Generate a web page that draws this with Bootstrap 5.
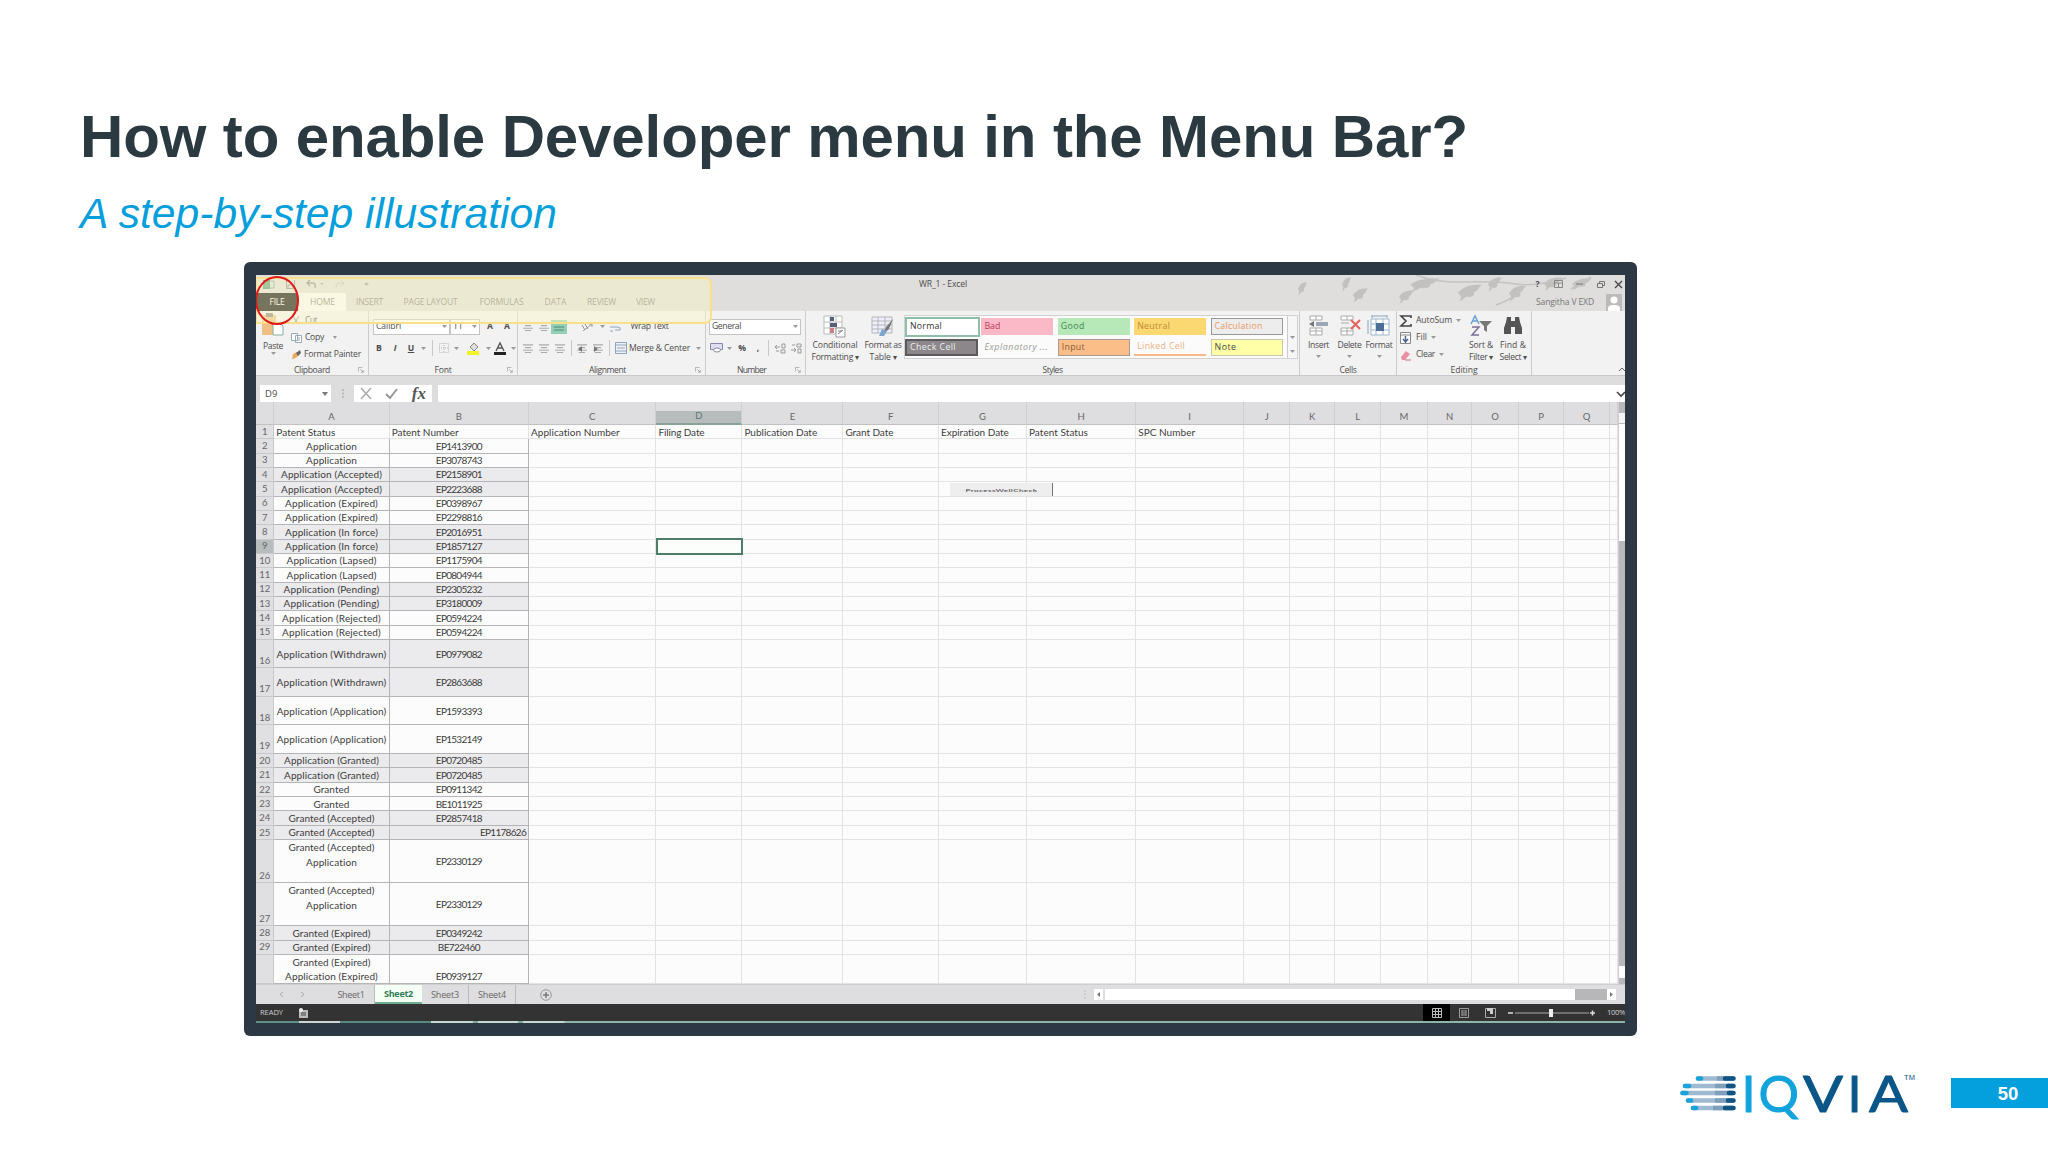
<!DOCTYPE html>
<html lang="en">
<head>
<meta charset="utf-8">
<meta name="viewport" content="width=device-width, initial-scale=1">
<title>How to enable Developer menu in the Menu Bar?</title>
<link href="https://cdn.jsdelivr.net/npm/bootstrap@5.3.0/dist/css/bootstrap.min.css" rel="stylesheet">
<style>
html,body{margin:0;height:1152px;overflow:hidden}
body{background:#fff;font-family:"Liberation Sans",Arial,sans-serif;color:#2c3a42}
svg{display:block;overflow:visible}
.slide{width:2048px;height:1152px;padding:100px 0 0 80px}
.slide-title{font-size:60px;font-weight:700;line-height:74px;margin:0;color:#2b3940;height:74px;white-space:nowrap}
.slide-sub{font-size:42.6px;font-style:italic;line-height:50px;color:#069fdb;margin:14px 0 0;height:50px;white-space:nowrap}
.shot{width:1393px;height:774px;margin:24px 0 0 164px;background:#2c3944;border-radius:6px;padding:13px 12px 12px}
.xl{width:1369px;height:749px;background:#dfdedf;overflow:hidden;font-family:"Open Sans",sans-serif;font-size:8.6px;line-height:11px;color:#4c4c4c}
.fit{display:inline-block;white-space:nowrap}
.topbar{height:36px;background:#dfdedd}
.titlerow{height:18px}
.tabrow{height:18px;color:#7c7c72}
.tabrow>*{display:flex;align-items:center;justify-content:center;height:18px}
.leafart{left:0;top:0}
.g-qat{padding-left:7px;gap:11px;width:300px}
.g-name{width:774px}
.winbtns{width:98px;display:grid;grid-template-columns:21px 21px 21px 21px 14px;justify-items:center;align-items:center}
.t-file{width:42px;background:#060600;color:#fff}
.t-home{width:47px;margin-left:1px;background:#fafafa}
.t-ins{width:47px}.t-page{width:75px}.t-form{width:67px}.t-data{width:41px}.t-rev{width:51px}.t-view{width:37px}
.t-user{margin-left:auto;width:92px;gap:12px;padding-right:0;color:#777}
.avatar{width:16px;height:17px;background:#bbb}
.ribbon{height:65px;background:#f3f2f3;border-bottom:1px solid #c9c9c9}
.grp{border-right:1px solid #cdcccd;display:grid;grid-template-rows:54px 11px;position:relative}
.grp-title{text-align:center;display:flex;align-items:center;justify-content:center}
.launch{position:absolute;right:4px;bottom:2px}
.w-clip{width:113px}.w-font{width:149px}.w-align{width:188px}.w-num{width:100px}.w-sty{width:494px}.w-cell{width:97px}.w-edit{width:135px}
.clip-body{display:grid;grid-template-columns:34px 1fr;padding-top:1px}
.clip-list{display:grid;grid-template-rows:17px 17px 17px;align-items:center;padding-left:1px}
.clip-list>div{display:flex;align-items:center;gap:3px}
.stack2{display:grid;grid-template-rows:19px 16px;padding-top:6px;row-gap:4px}
.stack2>div{align-items:center;justify-items:center;display:grid}
.box{height:16px;background:#fff;border:1px solid #c4c4c4;display:flex;align-items:center;justify-content:space-between;padding:0 2px;width:100%}
.f1{grid-template-columns:77px 30px 20px 14px;padding-left:4px;justify-content:start}
.f2{grid-template-columns:16px 16px 16px 8px 10px 14px 10px 24px 6px 18px 8px;padding-left:2px;justify-content:start}
.a1{grid-template-columns:16px 15px 16px 10px 20px 10px 18px 49px;padding-left:2px;justify-content:start}
.a2{grid-template-columns:16px 16px 16px 6px 16px 16px 7px 15px 63px 14px;padding-left:2px;justify-content:start}
.n1{grid-template-columns:92px;padding-left:3px}
.n2{grid-template-columns:20px 6px 20px 12px 8px 16px 17px;padding-left:0;justify-content:start}
.vsep{width:1px;height:16px;background:#c8c8c8}
.bigbtn{display:flex;flex-direction:column;align-items:center;line-height:12px}
.bigbtn svg{margin-bottom:1px}
.sty-body{display:grid;grid-template-columns:54px 42px 1fr;padding:4px 5px 0 2px}
.gal{height:44px;background:#fbfbfb;border:1px solid #d2d2d2;display:grid;grid-template-columns:repeat(5,76.4px) 10px;grid-template-rows:21px 21px;align-items:center}
.sw{width:72px;height:17px;padding-left:3px;display:flex;align-items:center;font-size:8.8px}
.s-norm{width:75px;height:20px;border:2px solid #8fbfaa;background:#fff;color:#333}
.s-bad{background:#fbb8c6;color:#b5405a}.s-good{background:#b6e8b8;color:#3f8a4c}
.s-neu{background:#fcd873;color:#c08a30}.s-calc{background:#eeedee;border:1px solid #999;color:#e89a5e}
.s-check{background:#8b878a;border:2px solid #5c5a5c;color:#eee;width:73px}.s-exp{color:#999;font-style:italic}
.s-inp{background:#fcbe88;border:1px solid #a99;color:#8a5a38}.s-link{color:#eeb184;border-bottom:2px solid #f8b98a}
.s-note{background:#ffffa8;border:1px solid #c8c8b0;color:#444}
.gal-scroll{grid-column:6;grid-row:1/3;height:42px;border-left:1px solid #ccc;display:grid;grid-template-rows:repeat(3,14px);justify-items:center;align-items:center;background:#f6f6f6}
.cell-body{display:grid;grid-template-columns:33px 29px 30px;padding:4px 0 0 2px}
.edit-body{display:grid;grid-template-columns:66px 34px 30px;padding-left:3px}
.edit-list{display:grid;grid-template-rows:17px 17px 17px;padding-top:1px;align-items:center}
.edit-list>div{display:flex;gap:4px;align-items:center}
.fbar{height:26px;padding:9px 0 0 4px;background:#dedddd}
.fbar>div{height:17px;background:#fff;display:flex;align-items:center}
.namebox{width:71px;padding:0 3px 0 5px;justify-content:space-between;font-size:9.5px}
.fbar .dots{width:23px;background:none;justify-content:center}
.fxbox{width:78px;justify-content:space-between;padding:0 6px}
.fxi{font-family:"Liberation Serif",serif;font-style:italic;font-weight:700;font-size:17px;line-height:16px;color:#555}
.fline{width:1187px;margin-left:6px;justify-content:flex-end;padding-right:0}
.gridwrap{height:582px;position:relative;font-family:Lato,sans-serif;font-size:10px;line-height:14.33px;color:#3c3c3c;background:#dedddf}
.cells{width:1362px;height:582px;overflow:hidden;display:grid;grid-template-columns:18.3px 115.4px 139.3px 127.5px 85.9px 101px 95.6px 88px 109.2px 107.8px 46.4px 44.7px 46.3px 46.4px 44.6px 46.6px 45.4px 45.3px 1fr;grid-template-rows:23px 14.33px repeat(14,14.33px) repeat(4,28.5px) repeat(6,14.4px) 43px 43px 14.3px 14.3px 29.3px}
.cells>div{border-right:1px solid #e3e2e6;border-bottom:1px solid #e3e2e6;background:#fdfcfd;display:flex;align-items:center;overflow:visible;white-space:nowrap;min-width:0;min-height:0}
.cells>.hd{background:linear-gradient(#dedddf,#dedddf);border-right-color:#cfced0;border-bottom:1px solid #c2c2c2;justify-content:center;padding-top:8px;color:#666;font-size:9.5px}
.cells>.hd-sel{background:linear-gradient(#dedddf 0 9px,#b7bcbc 9px);border-bottom:2px solid #8aa398;color:#5f7a70}
.cells>.rn{background:#e0dfe1;border-color:#c9c8ca;justify-content:center;align-items:flex-end;font-size:9.5px;line-height:12.5px;color:#666}
.cells>.rn-sel{background:#b7bcbc}
.cells>.data{border-color:#b5b4b8;justify-content:center;text-align:center}
.cells>.shade{background:#ebeaec}
.cells>.endr{justify-content:flex-end;padding-right:2px}
.cells>.toprow{padding-left:2px;border-bottom-color:#e3e2e6}
.cells>.two{align-items:flex-start}
.selbox{left:400px;top:136px;width:87px;height:17px;border:2px solid #4f7e68;background:#fbfefb}
.macro{left:694px;top:81px;width:103px;height:13px;background:#efeeef;border-right:1px solid #777;display:flex;align-items:center;justify-content:center;padding-left:1px}
.macro span{font-weight:700;line-height:10px;font-size:8px;color:#666;transform:scaleY(.5)}
.vbar{width:7px;height:582px;background:#b9b8ba;border-left:1px solid #d0d0d0;padding-top:11px}
.vbar .up{height:11px;background:#f4f4f4;border-bottom:1px solid #bbb}
.vbar .th{height:117px;background:#fff}
.vbar .dn{margin-top:425px;height:12px;background:#fff}
.tabs{height:20px;background:#dedddf;border-top:1px solid #cfcfcf;color:#666;font-size:9px}
.tabs>*{height:19px;display:flex;align-items:center;justify-content:center}
.tabs>.st-nav{width:72px}
.tabs>.st-add{width:60px}
.st{width:47px;border-right:1px solid #bbb}
.st-on{background:#f4fff6;color:#2f7d55;font-weight:700;border-bottom:2px solid #6fae8d;border-right:0}
.hs{width:539px;height:11px!important;align-self:center;gap:0;justify-content:flex-start!important}
.hs .ar{width:9px;height:11px;background:#fff}
.hs .th{width:470px;height:11px;background:#fff;margin-left:2px}
.hs .tr{width:32px;height:11px;background:#b7b6b8}
.status{height:17px;background:#343334;color:#ccc;font-size:7.6px}
.status>*{height:17px;display:flex;align-items:center;justify-content:center}
.v-btn{width:27px}.v-zoom{width:96px}.v-pct{width:18px}.v-gap{width:7px}
.sliver{height:3px;background:linear-gradient(90deg,#5f8f88 0 43px,#cdd6d3 43px 84px,#56897c 84px 175px,#c5d9d2 175px 217px,#7fa79c 217px 222px,#c5d9d2 222px 262px,#7fa79c 262px 267px,#c5d9d2 267px 307px,#8fb3a8 310px);border-bottom:1px solid #2c3944}
.hilite{left:-1px;top:2px;width:457px;height:47px;border:2px solid #fbe08c;border-radius:0 7px 7px 0;background:rgba(250,246,200,.46)}
.ring{left:-1px;top:1px;width:44px;height:49px;border:2px solid #e01818;border-radius:50%}
.footer-row{padding-top:35px}
.pageno{width:97px;height:30px;background:#04a0de;color:#fff;font-weight:700;font-size:18.5px;line-height:31px;text-align:center;padding-left:17px;margin:7px 0 0 36px}
</style>
<script src="https://cdn.jsdelivr.net/npm/bootstrap@5.3.0/dist/js/bootstrap.bundle.min.js"></script>
</head>
<body>
<svg width="0" height="0" class="position-absolute">
 <defs>
  <symbol id="dd" viewBox="0 0 5 3"><path d="M0 0h5L2.500 3z" fill="#999"/></symbol>
  <symbol id="lines" viewBox="0 0 11 10"><path d="M0 1h11M2 4h7M0 7h11M2 9.500h7" stroke="#aaa" stroke-width="1.200"/></symbol>
  <symbol id="ln" viewBox="0 0 8 8"><path d="M.5 6V.5H6M3 3l4 4M7 4v3H4" stroke="#999" fill="none"/></symbol>
  <symbol id="leaf" viewBox="0 0 20 20" preserveAspectRatio="none"><path d="M0 10C4 3 11 0 20 1 16 4 18 7 13 9 15 12 11 16 7 14 5 16 3 19 1 19 4 14 2 12 0 10z" fill="#bdbcbc"/></symbol>
 </defs>
</svg>
<main class="slide">
 <h1 class="slide-title"><span class="fit" data-w="1388">How to enable Developer menu in the Menu Bar?</span></h1>
 <p class="slide-sub"><span class="fit" data-w="477">A step-by-step illustration</span></p>

 <section class="shot">
  <div class="xl position-relative">
   <header class="topbar position-relative">
    <svg class="leafart position-absolute" width="1369" height="36">
     <g opacity=".85">
      <use href="#leaf" x="1042" y="7" width="9" height="14"/><use href="#leaf" x="1086" y="2" width="9" height="15"/>
      <use href="#leaf" x="1097" y="13" width="15" height="15"/><use href="#leaf" x="1143" y="15" width="15" height="14"/>
      <use href="#leaf" x="1154" y="3" width="30" height="14"/><use href="#leaf" x="1202" y="9" width="24" height="18"/>
      <use href="#leaf" x="1232" y="2" width="14" height="15"/><use href="#leaf" x="1253" y="10" width="17" height="17"/>
      <use href="#leaf" x="1288" y="2" width="18" height="14"/><use href="#leaf" x="1316" y="3" width="20" height="12"/>
     </g>
     <path d="M1160 0q20 8 50 7t50 2 50-6M1240 30q18-6 28-18M1315 14l20-12" stroke="#c4c3c3" stroke-width="1.500" fill="none"/>
    </svg>
    <div class="titlerow d-flex align-items-center position-relative">
     <div class="g-qat d-flex align-items-center">
      <svg width="12" height="10"><path d="M0 1h7v9H0z" fill="#4e9a70"/><path d="M7 2h4v7H7M2 3l3 5M5 3L2 8" stroke="#79a78c" fill="none"/></svg>
      <svg width="9" height="9"><path d="M.5 0v8.500h8V0M2 8V5h5v3" stroke="#888" fill="none"/></svg>
      <svg width="18" height="9"><path d="M1 3h6q3 0 2 5M4 0L1 3l3 3" stroke="#888" stroke-width="1.400" fill="none"/><path d="M14 3h4l-2 2z" fill="#999"/></svg>
      <svg width="18" height="9" opacity=".35"><path d="M9 3H4Q1 3 1 8M6 0l3 3-3 3" stroke="#888" fill="none"/></svg>
      <svg width="5" height="3"><use href="#dd"/></svg>
     </div>
     <div class="g-name text-center"><span class="fit" data-w="48">WR_1 - Excel</span></div>
     <div class="winbtns ms-auto"><b>?</b>
      <svg width="9" height="8"><path d="M.5.5h8v7h-8zM.5 3h8M4.500 3v4" stroke="#888" fill="none"/></svg>
      <svg width="7" height="2"><path d="M0 1h7" stroke="#777"/></svg>
      <svg width="8" height="7"><path d="M.5 2.500h5v4h-5zM2.500 2V.5h5v4H6" stroke="#777" fill="none"/></svg>
      <svg width="7" height="7"><path d="M0 0l7 7M7 0L0 7" stroke="#444" stroke-width="1.300"/></svg>
     </div>
    </div>
    <nav class="tabrow d-flex position-relative">
     <div class="t-file"><span class="fit" data-w="15">FILE</span></div><div class="t-home"><span class="fit" data-w="25">HOME</span></div>
     <div class="t-ins"><span class="fit" data-w="27">INSERT</span></div><div class="t-page"><span class="fit" data-w="54">PAGE LAYOUT</span></div>
     <div class="t-form"><span class="fit" data-w="44">FORMULAS</span></div><div class="t-data"><span class="fit" data-w="22">DATA</span></div>
     <div class="t-rev"><span class="fit" data-w="29">REVIEW</span></div><div class="t-view"><span class="fit" data-w="19">VIEW</span></div>
     <div class="t-user"><span class="fit" data-w="58">Sangitha V EXD</span>
      <svg class="avatar" width="16" height="17"><circle cx="8" cy="6" r="3.500" fill="#fff"/><path d="M2 17v-3q0-3 6-3t6 3v3z" fill="#fff"/></svg></div>
    </nav>
   </header>

   <div class="ribbon d-flex">
    <div class="grp w-clip">
     <div class="clip-body">
      <div class="bigbtn"><svg width="24" height="27"><rect x="1" y="3" width="14" height="20" rx="1" fill="#efbf83"/><rect x="5" y="1" width="7" height="4" fill="#8c8378"/><path d="M12 11h7l3 3v9H12z" fill="#fff" stroke="#8ab09a"/></svg><span class="fit" data-w="20">Paste</span><svg width="5" height="3"><use href="#dd"/></svg></div>
      <div class="clip-list">
       <div><svg width="11" height="10"><path d="M2 0l5 8M8 0L3 8" stroke="#888"/></svg><span class="fit" data-w="12">Cut</span></div>
       <div><svg width="11" height="10"><path d="M.5.5h6v7h-6zM4.500 2.500h6v7h-6zM6 5h3M6 7h3" stroke="#9ab" fill="#fff"/></svg><span class="fit" data-w="19">Copy</span><svg width="14" height="3"><path d="M6 0h4l-2 3z" fill="#999"/></svg></div>
       <div><svg width="10" height="10"><path d="M1 9l1-5 4-2 2 3-3 3z" fill="#efa95e"/><path d="M5 3l4-3 1 3-3 3z" fill="#666"/></svg><span class="fit" data-w="57">Format Painter</span></div>
      </div>
     </div>
     <div class="grp-title"><span class="fit" data-w="36">Clipboard</span></div><svg class="launch" width="6" height="6"><use href="#ln"/></svg>
    </div>
    <div class="grp w-font">
     <div class="stack2">
      <div class="f1"><div class="box"><span class="fit" data-w="25">Calibri</span><svg width="5" height="3"><use href="#dd"/></svg></div><div class="box"><span>11</span><svg width="5" height="3"><use href="#dd"/></svg></div><b>A</b><b>A</b></div>
      <div class="f2"><b>B</b><i><b>I</b></i><u><b>U</b></u><svg width="5" height="3"><use href="#dd"/></svg><span class="vsep"></span>
       <svg width="10" height="10"><path d="M.5.5h9v9h-9zM5 0v10M0 5h10" stroke="#bbb" fill="none" stroke-dasharray="1 1"/></svg><svg width="5" height="3"><use href="#dd"/></svg>
       <svg width="13" height="13"><path d="M3 5l4-4 4 4-4 4z" fill="#ddd" stroke="#888"/><path d="M0 9h12v4H0z" fill="#f2f22a"/></svg><svg width="5" height="3"><use href="#dd"/></svg>
       <svg width="12" height="13"><path d="M2 9L6 1l4 8M3.500 6h5" stroke="#555" stroke-width="1.400" fill="none"/><path d="M0 10h12v3H0z" fill="#222"/></svg><svg width="5" height="3"><use href="#dd"/></svg></div>
     </div>
     <div class="grp-title"><span class="fit" data-w="17">Font</span></div><svg class="launch" width="6" height="6"><use href="#ln"/></svg>
    </div>
    <div class="grp w-align">
     <div class="stack2">
      <div class="a1"><svg width="10" height="9"><use href="#lines"/></svg><svg width="10" height="9"><use href="#lines"/></svg><svg width="16" height="14"><path d="M0 0h16v14H0z" fill="#93cfb5"/><path d="M3 7h10M3 10h10" stroke="#4e8a70"/></svg><i></i>
       <svg width="12" height="10"><path d="M1 3l3 5M4 2l3 5M2 9L11 2M8 2h3v3" stroke="#999" fill="none"/></svg><svg width="5" height="3"><use href="#dd"/></svg>
       <svg width="12" height="12"><path d="M0 2h11M0 6h8q3 0 2 3H5M0 10h3" stroke="#8aa5bd" fill="none"/></svg><span class="fit" data-w="38">Wrap Text</span></div>
      <div class="a2"><svg width="10" height="9"><use href="#lines"/></svg><svg width="10" height="9"><use href="#lines"/></svg><svg width="10" height="9"><use href="#lines"/></svg><span class="vsep"></span>
       <svg width="10" height="9"><use href="#lines"/><path d="M5 2L1 5l4 3z" fill="#777"/></svg><svg width="10" height="9"><use href="#lines"/><path d="M1 2l4 3-4 3z" fill="#777"/></svg><span class="vsep"></span>
       <svg width="12" height="12"><path d="M.5.5h11v11H.5zM0 3h12M0 9h12M2 6h8" stroke="#8aa5bd" fill="none"/></svg><span class="fit" data-w="61">Merge &amp; Center</span><svg width="5" height="3"><use href="#dd"/></svg></div>
     </div>
     <div class="grp-title pe-2"><span class="fit" data-w="37">Alignment</span></div><svg class="launch" width="6" height="6"><use href="#ln"/></svg>
    </div>
    <div class="grp w-num">
     <div class="stack2">
      <div class="n1"><div class="box"><span class="fit" data-w="29">General</span><svg width="5" height="3"><use href="#dd"/></svg></div></div>
      <div class="n2"><svg width="13" height="10"><path d="M.5.5h12v6H.5z" fill="#dde" stroke="#88a"/><ellipse cx="7" cy="7" rx="3.500" ry="2" fill="#fff" stroke="#88a"/></svg><svg width="5" height="3"><use href="#dd"/></svg><b>%</b><b>,</b><span class="vsep"></span>
       <svg width="11" height="9"><path d="M0 3h5M2 1L0 3l2 2M7 0v4h3V0zM1 7h3M6 6h4v3H6z" stroke="#999" fill="none"/></svg><svg width="11" height="9"><path d="M0 6h5M3 4l2 2-2 2M7 5v4h3V5zM1 1h3M6 0h4v3H6z" stroke="#999" fill="none"/></svg></div>
     </div>
     <div class="grp-title pe-2"><span class="fit" data-w="29">Number</span></div><svg class="launch" width="6" height="6"><use href="#ln"/></svg>
    </div>
    <div class="grp w-sty">
     <div class="sty-body">
      <div class="bigbtn"><svg width="24" height="23"><path d="M1 1h18v18H1zM1 7h18M1 13h18M7 1v18M13 1v18" stroke="#bbb" fill="#fff"/><path d="M7 2h4v4H7zM7 8h7v4H7z" fill="#555f78"/><path d="M7 13h4v5H7z" fill="#cf7c84"/><path d="M13 13h9v9h-9z" fill="#fff" stroke="#999"/><path d="M15 19l5-4M15 16h4" stroke="#777"/></svg><span class="fit" data-w="45">Conditional</span><span class="fit" data-w="47">Formatting<small> ▾</small></span></div>
      <div class="bigbtn"><svg width="24" height="23"><path d="M1 2h20v16H1zM1 6h20M1 10h20M1 14h20M7 2v16M14 2v16" stroke="#b5b5b5" fill="#eef"/><path d="M12 19l3-7 7-8-4 10z" fill="#777"/><path d="M8 21l3-7 5 2-3 5z" fill="#7da5cf"/></svg><span class="fit" data-w="37">Format as</span><span class="fit" data-w="27">Table<small> ▾</small></span></div>
      <div class="gal">
       <div class="sw s-norm"><span class="fit" data-w="32">Normal</span></div><div class="sw s-bad"><span class="fit" data-w="16">Bad</span></div><div class="sw s-good"><span class="fit" data-w="24">Good</span></div><div class="sw s-neu"><span class="fit" data-w="33">Neutral</span></div><div class="sw s-calc"><span class="fit" data-w="48">Calculation</span></div>
       <div class="gal-scroll"><svg width="5" height="3"></svg><svg width="5" height="3"><use href="#dd"/></svg><svg width="5" height="3"><use href="#dd"/></svg></div>
       <div class="sw s-check"><span class="fit" data-w="46">Check Cell</span></div><div class="sw s-exp"><span class="fit" data-w="64">Explanatory ...</span></div><div class="sw s-inp"><span class="fit" data-w="23">Input</span></div><div class="sw s-link"><span class="fit" data-w="48">Linked Cell</span></div><div class="sw s-note"><span class="fit" data-w="22">Note</span></div>
      </div>
     </div>
     <div class="grp-title pe-1"><span class="fit" data-w="20">Styles</span></div>
    </div>
    <div class="grp w-cell">
     <div class="cell-body">
      <div class="bigbtn"><svg width="22" height="23"><path d="M2 1h12v4H2zM2 13h12v7H2zM2 16h12M8 1v4M8 13v7" stroke="#aaa" fill="#fff"/><path d="M8 7h12v4H8z" fill="#9aa6b5"/><path d="M6 6v6L1 9z" fill="#777"/></svg><span class="fit" data-w="21">Insert</span><svg width="5" height="3" class="mt-1"><use href="#dd"/></svg></div>
      <div class="bigbtn"><svg width="22" height="23"><path d="M2 1h12v4H2zM2 13h12v7H2zM2 16h12M8 1v4M8 13v7M2 8h8" stroke="#aaa" fill="#fff"/><path d="M12 5l9 9M21 5l-9 9" stroke="#e0605c" stroke-width="2"/></svg><span class="fit" data-w="24">Delete</span><svg width="5" height="3" class="mt-1"><use href="#dd"/></svg></div>
      <div class="bigbtn"><svg width="22" height="23"><path d="M3 4h18v16H3zM3 9h18M3 15h18M8 4v16M15 4v16" stroke="#9db6cc" fill="#fff"/><path d="M8 8h8v8H8z" fill="#4b6f96"/><path d="M4 1h15M4 0v3M19 0v3M0 5v14" stroke="#8aa5bd"/></svg><span class="fit" data-w="27">Format</span><svg width="5" height="3" class="mt-1"><use href="#dd"/></svg></div>
     </div>
     <div class="grp-title"><span class="fit" data-w="17">Cells</span></div>
    </div>
    <div class="grp w-edit">
     <div class="edit-body">
      <div class="edit-list">
       <div><svg width="12" height="12"><path d="M11 3V1H1l5 5-5 5h10V9" stroke="#444" stroke-width="1.600" fill="none"/></svg><span class="fit" data-w="36">AutoSum</span><svg width="5" height="3"><use href="#dd"/></svg></div>
       <div><svg width="12" height="12"><path d="M.5.5h10v11H.5zM0 3h11" stroke="#888" fill="#fff"/><path d="M5.500 4v5M3 7l2.500 3L8 7" stroke="#47698c" stroke-width="1.500" fill="none"/></svg><span class="fit" data-w="11">Fill</span><svg width="5" height="3"><use href="#dd"/></svg></div>
       <div><svg width="12" height="12"><path d="M1 8l5-6 4 3-5 6H2z" fill="#ea8fa3"/><path d="M5 11h6" stroke="#b77"/></svg><span class="fit" data-w="19">Clear</span><svg width="5" height="3"><use href="#dd"/></svg></div>
      </div>
      <div class="bigbtn pt-1 pe-1"><svg width="22" height="23"><path d="M1 9l4-8 4 8M2 6h6" stroke="#6ba0d0" stroke-width="1.500" fill="none"/><path d="M2 12h7l-7 8h7" stroke="#7c6e96" stroke-width="1.500" fill="none"/><path d="M9 6h13l-5 5v6l-3-2v-4z" fill="#777"/></svg><span class="fit" data-w="24">Sort &amp;</span><span class="fit" data-w="24">Filter<small> ▾</small></span></div>
      <div class="bigbtn pt-1 pe-1"><svg width="20" height="23"><path d="M4 2h4v4h4V2h4l1 5 2 6v6h-7v-7H8v7H1v-6l2-6z" fill="#555"/></svg><span class="fit" data-w="26">Find &amp;</span><span class="fit" data-w="27">Select<small> ▾</small></span></div>
     </div>
     <div class="grp-title"><span class="fit" data-w="27">Editing</span></div>
    </div>
    <div class="ms-auto align-self-end pb-1"><svg width="6" height="4"><path d="M0 4l3-3 3 3" stroke="#666" fill="none"/></svg></div>
   </div>

   <div class="fbar d-flex">
    <div class="namebox"><span>D9</span><svg width="6" height="4"><path d="M0 0h6L3 4z" fill="#777"/></svg></div>
    <div class="dots"><svg width="2" height="9"><path d="M1 0v9" stroke="#999" stroke-dasharray="2 1.500"/></svg></div>
    <div class="fxbox"><svg width="12" height="11"><path d="M1 0l10 11M11 0L1 11" stroke="#aaa" stroke-width="1.500"/></svg><svg width="13" height="11"><path d="M1 6l4 4 7-9" stroke="#999" stroke-width="2" fill="none"/></svg><span class="fxi">fx</span></div>
    <div class="fline"><svg width="8" height="6"><path d="M0 1l4 4 4-4" stroke="#444" stroke-width="1.600" fill="none"/></svg></div>
   </div>

   <div class="gridwrap d-flex">
    <div class="cells" id="cells"></div>
    <div class="vbar"><div class="up"></div><div class="th"></div><div class="dn"></div></div>
    <div class="selbox position-absolute"></div>
    <div class="macro position-absolute"><span class="fit" data-w="72">ProcessWellCheck</span></div>
   </div>

   <div class="tabs d-flex">
    <div class="st-nav gap-3"><svg width="5" height="5"><path d="M4 0L1 2.500 4 5" stroke="#aaa" fill="none"/></svg><svg width="5" height="5"><path d="M1 0l3 2.500L1 5" stroke="#aaa" fill="none"/></svg></div>
    <div class="st"><span class="fit" data-w="27">Sheet1</span></div><div class="st st-on"><span class="fit" data-w="29">Sheet2</span></div><div class="st"><span class="fit" data-w="28">Sheet3</span></div><div class="st"><span class="fit" data-w="28">Sheet4</span></div>
    <div class="st-add"><svg width="12" height="12"><circle cx="6" cy="6" r="5.300" fill="none" stroke="#999"/><path d="M6 3v6M3 6h6" stroke="#777" stroke-width="1.400"/></svg></div>
    <div class="ms-auto"><svg width="2" height="9"><path d="M1 0v9" stroke="#bbb" stroke-dasharray="2 1.500"/></svg></div>
    <div class="hs ps-2"><span class="ar"><svg width="9" height="11"><path d="M6 3L3 5.500 6 8z" fill="#777"/></svg></span><span class="th"></span><span class="tr"></span><span class="ar"><svg width="9" height="11"><path d="M3 3l3 2.500L3 8z" fill="#777"/></svg></span></div>
   </div>
   <div class="status d-flex">
    <div class="ps-1"><span class="fit" data-w="23">READY</span></div>
    <div class="ps-3"><svg width="10" height="10"><path d="M0 2h9v8H0z" fill="#bbb"/><path d="M2 5h5M2 7h5" stroke="#444"/><circle cx="2" cy="2" r="2" fill="#eee"/></svg></div>
    <div class="v-btn ms-auto bg-black"><svg width="10" height="10"><path d="M.5.5h9v9h-9zM0 3.500h10M0 6.500h10M3.500 0v10M6.500 0v10" stroke="#bbb" fill="none"/></svg></div>
    <div class="v-btn"><svg width="10" height="10"><path d="M.5.5h9v9h-9zM3 2v6M7 2v6M3 3h4M3 5h4M3 7h4" stroke="#999" fill="none"/></svg></div>
    <div class="v-btn"><svg width="11" height="10"><path d="M.5.5h10v9H.5z" stroke="#aaa" fill="none"/><path d="M2 0h6v6H5V3H2z" fill="#ccc"/></svg></div>
    <div class="v-zoom"><svg width="88" height="10"><path d="M0 5h5M82 5h5M84.500 2.500v5" stroke="#ddd" stroke-width="1.500"/><path d="M7 5h74" stroke="#aaa"/><path d="M41 1h4v8h-4z" fill="#eee"/></svg></div>
    <div class="v-gap"></div>
    <div class="v-pct"><span class="fit" data-w="18">100%</span></div>
   </div>
   <div class="sliver"></div>

   <div class="hilite position-absolute"></div>
   <div class="ring position-absolute"></div>
  </div>
 </section>

 <footer class="footer-row d-flex justify-content-end">
  <svg width="236" height="46" viewBox="0 0 236 46" role="img" aria-label="IQVIA">
   <g stroke-width="4.600" stroke-linecap="round">
    <path d="M19 7.500h35M6 15h48M3.500 22h50M9 29.500h45M14 37h40" stroke="#9dbad2"/>
    <path d="M36 15h18M36 22h18M36 29.500h18M34 37h20M38 7.500h16" stroke="#7f9fbd" stroke-linecap="butt"/>
    <path d="M19 7.500h3M6 15h4M3.500 22h4M9 29.500h3M14 37h3" stroke="#18a3da"/>
    <path d="M46 7.500h8.500M49 15h5.500M50 22h4.500M49 29.500h5.500M46 37h8.500" stroke="#0f5483"/>
   </g>
   <g font-family="Lato" font-size="50.500" fill="#12a3dc" stroke="#12a3dc" stroke-width="1" stroke-linejoin="round">
    <text x="62.500" y="40.500">I</text><text x="79.500" y="40.500">Q</text>
    <g fill="#0b5688" stroke="#0b5688"><text x="124" y="40.500" textLength="40" lengthAdjust="spacingAndGlyphs">V</text><text x="168.500" y="40.500">I</text><text x="190" y="40.500" textLength="39" lengthAdjust="spacingAndGlyphs">A</text></g>
   </g>
   <text x="225" y="8.500" font-family="Liberation Sans" font-size="7.500" fill="#0b5688" textLength="11">TM</text>
  </svg>
  <div class="pageno">50</div>
 </footer>
</main>
<script>
const cols = "ABCDEFGHIJKLMNOPQ".split("");
const heads = ["Patent Status","Patent Number","Application Number","Filing Date","Publication Date","Grant Date","Expiration Date","Patent Status","SPC Number"];
const headW = [59,67,89,46,73,48,68,59,57];
const rows = [
 ["Application","EP1413900",0],["Application","EP3078743",0],
 ["Application (Accepted)","EP2158901",1],["Application (Accepted)","EP2223688",1],
 ["Application (Expired)","EP0398967",0],["Application (Expired)","EP2298816",0],
 ["Application (In force)","EP2016951",1],["Application (In force)","EP1857127",1],
 ["Application (Lapsed)","EP1175904",0],["Application (Lapsed)","EP0804944",0],
 ["Application (Pending)","EP2305232",1],["Application (Pending)","EP3180009",1],
 ["Application (Rejected)","EP0594224",0],["Application (Rejected)","EP0594224",0],
 ["Application (Withdrawn)","EP0979082",1],["Application (Withdrawn)","EP2863688",1],
 ["Application (Application)","EP1593393",0],["Application (Application)","EP1532149",0],
 ["Application (Granted)","EP0720485",1],["Application (Granted)","EP0720485",1],
 ["Granted","EP0911342",0],["Granted","BE1011925",0],
 ["Granted (Accepted)","EP2857418",1],["Granted (Accepted)","EP1178626",1],
 ["Granted (Accepted)|Application","EP2330129",0],["Granted (Accepted)|Application","EP2330129",0],
 ["Granted (Expired)","EP0349242",1],["Granted (Expired)","BE722460",1],
 ["Granted (Expired)|Application (Expired)","EP0939127",0]];
const widths = {"Application":51,"Application (Accepted)":101,"Application (Expired)":93,"Application (In force)":93,"Application (Lapsed)":90,"Application (Pending)":96,"Application (Rejected)":99,"Application (Withdrawn)":110,"Application (Application)":110,"Application (Granted)":95,"Granted":36,"Granted (Accepted)":86,"Granted (Expired)":78};
const span = (t,w) => `<span class="fit" data-w="${w}">${t}</span>`;
let h = `<div class="hd"></div>` + cols.map(c => `<div class="hd${c==="D"?" hd-sel":""}">${c}</div>`).join("") + `<div class="hd"></div>`;
h += `<div class="rn">1</div>` + cols.map((c,i) => `<div class="toprow">${heads[i]?span(heads[i],headW[i]):""}</div>`).join("") + `<div></div>`;
rows.forEach((r,i) => {
  const n = i+2, sh = r[2]?" shade":"", last = n===30;
  const a = r[0].split("|").map(t => span(t,widths[t])).join("<br>");
  h += `<div class="rn${n===9?" rn-sel":""}">${last?"":n}</div>`;
  h += `<div class="data${sh}${r[0].includes("|")?" two":""}"><div>${a}</div></div>`;
  h += `<div class="data${sh}${n===25?" endr":""}${last?" align-items-end":""}">${span(r[1],r[1].length===8?42:46)}</div>`;
  h += "<div></div>".repeat(16);
});
document.getElementById("cells").innerHTML = h;
document.querySelectorAll(".fit").forEach(e => {
  const w = +e.dataset.w, n = e.textContent.length;
  const cur = e.offsetWidth ? parseFloat(getComputedStyle(e).width) : w;
  e.style.letterSpacing = ((w-cur)/n).toFixed(3)+"px";
});
</script>
</body>
</html>
